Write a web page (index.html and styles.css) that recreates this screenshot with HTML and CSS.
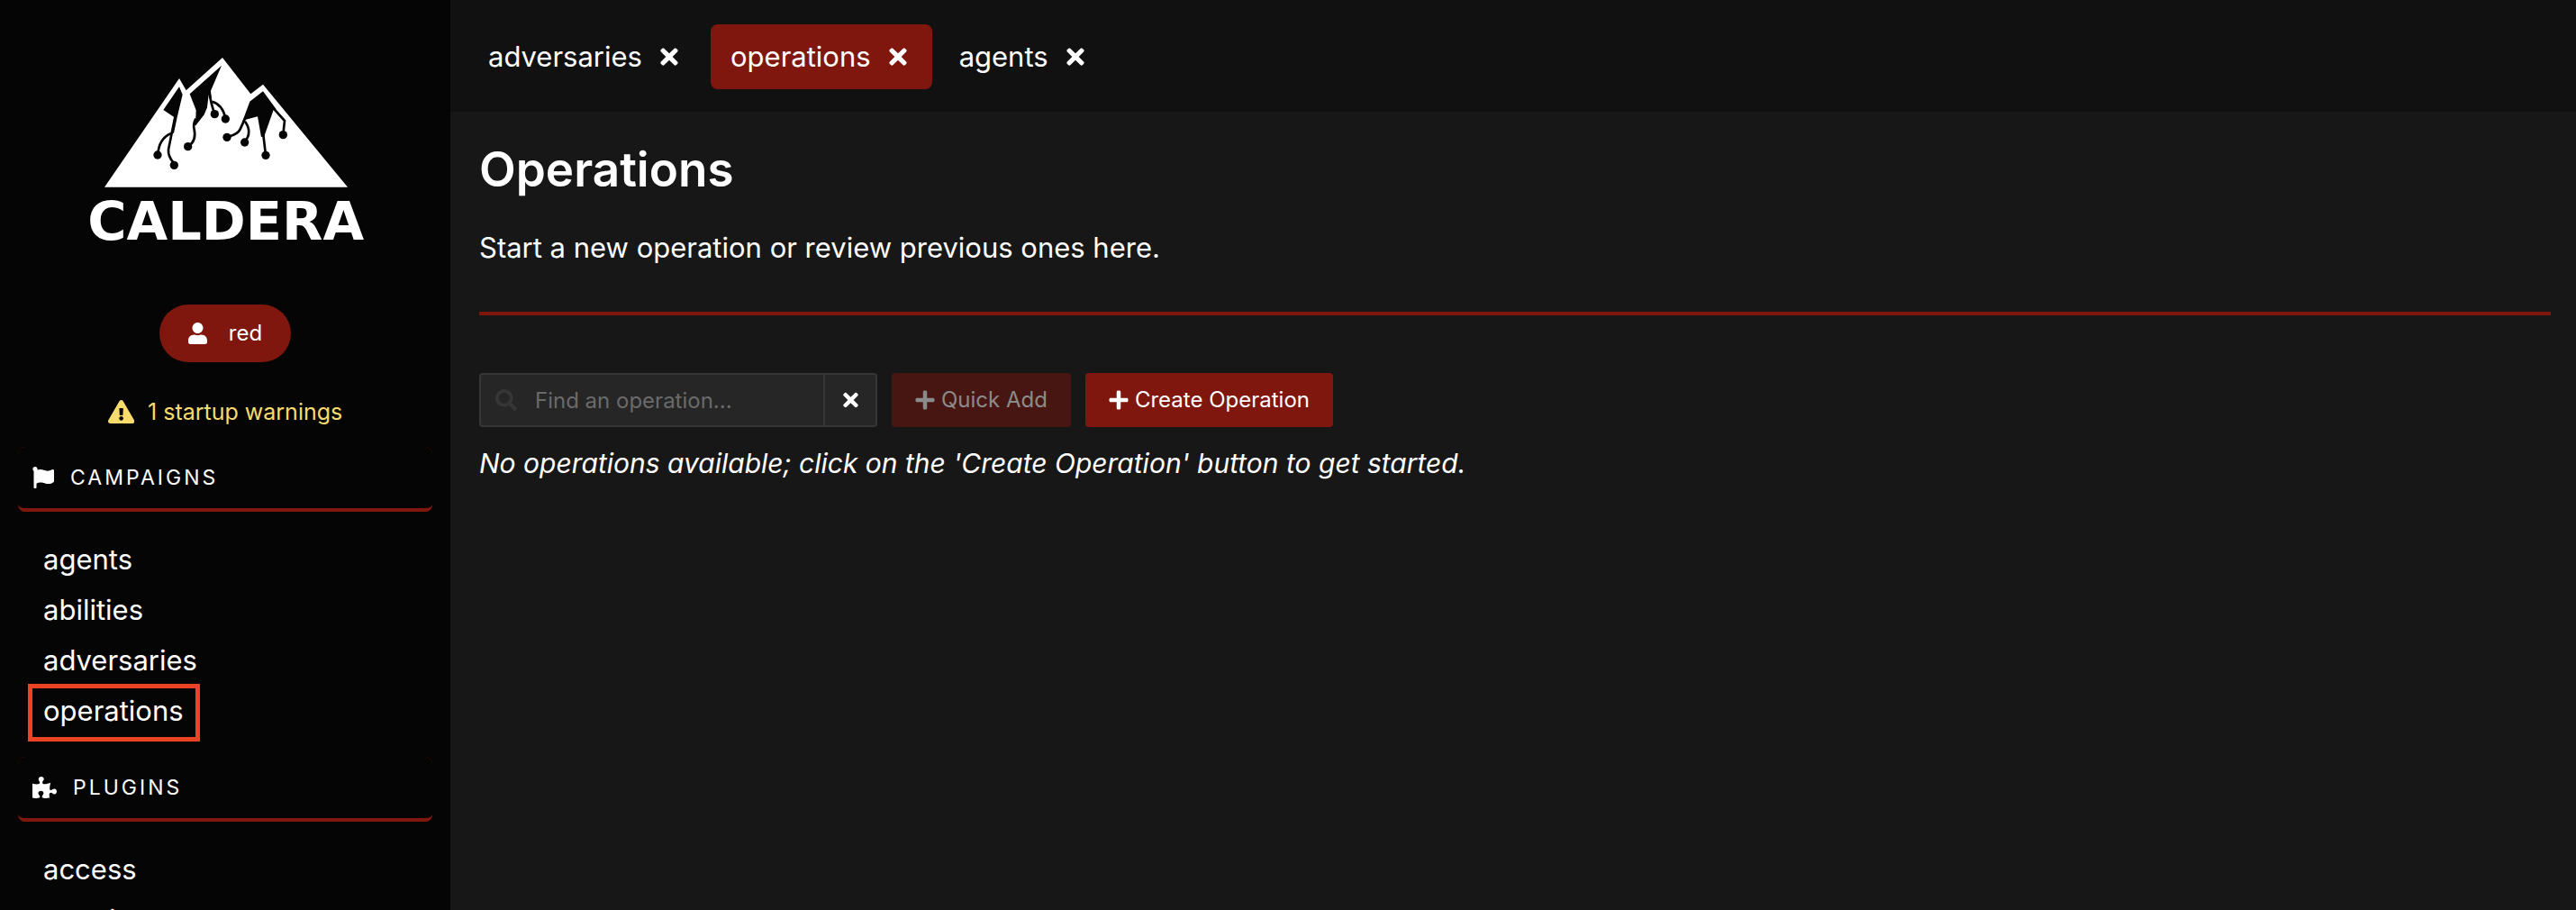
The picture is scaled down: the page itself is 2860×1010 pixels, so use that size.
FILE: index.html
```html
<!DOCTYPE html>
<html lang="en">
<head>
<meta charset="utf-8">
<title>Caldera - Operations</title>
<link rel="stylesheet" href="styles.css">
</head>
<body>
<svg class="sprite" aria-hidden="true">
  <symbol id="times" viewBox="0 0 352 512"><path d="M242.72 256l100.07-100.07c12.28-12.28 12.28-32.19 0-44.48l-22.24-22.24c-12.28-12.28-32.19-12.28-44.48 0L176 189.28 75.93 89.21c-12.28-12.28-32.19-12.28-44.48 0L9.21 111.45c-12.28 12.28-12.28 32.19 0 44.48L109.28 256 9.21 356.07c-12.28 12.28-12.28 32.19 0 44.48l22.24 22.24c12.28 12.28 32.2 12.28 44.48 0L176 322.72l100.07 100.07c12.28 12.28 32.2 12.28 44.48 0l22.24-22.24c12.28-12.28 12.28-32.19 0-44.48L242.72 256z"/></symbol>
  <symbol id="plus" viewBox="0 0 448 512"><path d="M416 208H272V64c0-17.67-14.33-32-32-32h-32c-17.67 0-32 14.33-32 32v144H32c-17.67 0-32 14.33-32 32v32c0 17.67 14.33 32 32 32h144v144c0 17.67 14.33 32 32 32h32c17.67 0 32-14.33 32-32V304h144c17.67 0 32-14.33 32-32v-32c0-17.67-14.33-32-32-32z"/></symbol>
</svg>
<div class="layout">
  <aside class="sidebar">
    <svg class="logo" viewBox="0 0 1020 690" role="img" aria-label="Caldera">
      <g transform="translate(90 30)">
        <path fill="#fff" d="M18 443L267 81l23 40L411 12l94 121 41-32L828 443z"/>
        <g class="logo-cut">
          <path d="M267 109L214 186l36 24L242 264l7-1L260 211 278 135z"/>
          <path d="M408 38L302 133l21 54-1 28-10 18 10 5 28-36 10-24 5-42 10 20-3-34z"/>
          <path d="M546 124L502 158 477 226l12-8 39-10 12 68 10-2 31-88 9-2z"/>
        </g>
        <g class="logo-trace">
          <path d="M254 205L231 318q-2 24 19 46"/><path d="M240 264q-42 18-44 72"/>
          <path d="M322 215q-10 22-5 36 8 38-20 56"/>
          <path d="M368 132q4 30 17 68"/><path d="M376 158q36 10 45 56"/>
          <path d="M486 215L470 250q-8 18-44 26"/><path d="M486 224q26 36-1 68"/>
          <path d="M546 260L555 336"/><path d="M582 182L618 222 613 268"/>
        </g>
        <g class="logo-cut">
          <circle cx="195" cy="336" r="14"/><circle cx="250" cy="370" r="14"/><circle cx="296" cy="308" r="14"/>
          <circle cx="385" cy="200" r="14"/><circle cx="421" cy="216" r="14"/><circle cx="426" cy="277" r="14"/>
          <circle cx="485" cy="294" r="14"/><circle cx="555" cy="337" r="14"/><circle cx="613" cy="269" r="14"/>
        </g>
      </g>
      <text class="wordmark" x="512" y="649" text-anchor="middle">CALDERA</text>
    </svg>
    <button class="user" type="button">
      <svg class="icon-24" viewBox="0 0 448 512"><path d="M224 256c70.7 0 128-57.3 128-128S294.7 0 224 0 96 57.3 96 128s57.3 128 128 128zm89.6 32h-16.7c-22.2 10.2-46.9 16-72.9 16s-50.6-5.8-72.9-16h-16.7C60.2 288 0 348.2 0 422.4V464c0 26.5 21.5 48 48 48h352c26.5 0 48-21.5 48-48v-41.6c0-74.2-60.2-134.4-134.4-134.4z"/></svg>
      <span>red</span>
    </button>
    <a class="warnings" href="#">
      <svg class="icon-26" viewBox="0 0 576 512"><path d="M569.517 440.013C587.975 472.007 564.806 512 527.94 512H48.054c-36.937 0-59.999-40.055-41.577-71.987L246.423 23.985c18.467-32.009 64.72-31.951 83.154 0l239.94 416.028zM288 354c-25.405 0-46 20.595-46 46s20.595 46 46 46 46-20.595 46-46-20.595-46-46-46zm-43.673-165.346l7.418 136c.347 6.364 5.609 11.346 11.982 11.346h48.546c6.373 0 11.635-4.982 11.982-11.346l7.418-136c.375-6.874-5.098-12.654-11.982-12.654h-63.383c-6.884 0-12.356 5.78-11.981 12.654z"/></svg>
      <span>1 startup warnings</span>
    </a>
    <nav class="menu">
      <div class="menu-head">
        <h2 class="menu-label">
          <svg class="icon-24" viewBox="0 0 512 512"><path d="M349.565 98.783C295.978 98.783 251.721 64 184.348 64c-24.955 0-47.309 4.384-68.045 12.013a55.947 55.947 0 0 0 3.586-23.562C118.117 24.015 94.806 1.206 66.338.048 34.345-1.254 8 24.296 8 56c0 19.026 9.497 35.825 24 45.945V488c0 13.255 10.745 24 24 24h16c13.255 0 24-10.745 24-24v-94.4c28.311-12.064 63.582-22.122 114.435-22.122 53.588 0 97.844 34.783 165.217 34.783 48.169 0 86.667-16.294 122.505-40.858C506.84 359.452 512 349.571 512 339.045v-243.1c0-23.393-24.269-38.87-45.485-29.016-34.338 15.948-76.454 31.854-116.95 31.854z"/></svg>
          <span>CAMPAIGNS</span>
        </h2>
      </div>
      <ul class="menu-list">
        <li><a href="#">agents</a></li>
        <li><a href="#">abilities</a></li>
        <li><a href="#">adversaries</a></li>
        <li><a class="marked" href="#">operations</a></li>
      </ul>
      <div class="menu-head">
        <h2 class="menu-label">
          <svg class="icon-24" viewBox="0 0 576 512"><path d="M519.442 288.651c-41.519 0-59.5 31.593-82.058 31.593C377.409 320.244 432 144 432 144s-196.288 80-196.288-3.297c0-35.827 36.288-46.25 36.288-85.985C272 19.216 243.885 0 210.539 0c-34.654 0-66.366 18.891-66.366 56.346 0 41.364 31.711 59.277 31.711 81.75C175.885 207.719 0 166.758 0 166.758v333.237s178.635 41.047 178.635-28.662c0-22.473-40-40.107-40-81.471 0-37.456 29.25-56.346 63.577-56.346 33.673 0 61.788 19.216 61.788 54.717 0 39.735-36.288 50.158-36.288 85.985 0 60.803 129.675 25.73 181.23 25.73 0 0-34.725-120.101 25.827-120.101 35.962 0 46.423 36.152 86.308 36.152C556.712 416 576 387.99 576 354.443c0-34.199-18.962-65.792-56.558-65.792z"/></svg>
          <span>PLUGINS</span>
        </h2>
      </div>
      <ul class="menu-list">
        <li><a href="#">access</a></li>
        <li><a href="#">atomic</a></li>
      </ul>
    </nav>
  </aside>
  <main class="main">
    <div class="tabs">
      <div class="tab"><a href="#">adversaries</a><button type="button" aria-label="Close adversaries"><svg class="icon-28"><use href="#times"/></svg></button></div>
      <div class="tab active"><a href="#">operations</a><button type="button" aria-label="Close operations"><svg class="icon-28"><use href="#times"/></svg></button></div>
      <div class="tab"><a href="#">agents</a><button type="button" aria-label="Close agents"><svg class="icon-28"><use href="#times"/></svg></button></div>
    </div>
    <section class="content">
      <h1>Operations</h1>
      <p class="intro">Start a new operation or review previous ones here.</p>
      <hr>
      <div class="toolbar">
        <div class="search">
          <svg class="icon-24" viewBox="0 0 512 512"><path d="M505 442.7L405.3 343c-4.5-4.5-10.6-7-17-7H372c27.6-35.3 44-79.7 44-128C416 93.1 322.9 0 208 0S0 93.1 0 208s93.1 208 208 208c48.3 0 92.7-16.4 128-44v16.3c0 6.4 2.5 12.5 7 17l99.7 99.7c9.4 9.4 24.6 9.4 33.9 0l28.3-28.3c9.4-9.4 9.4-24.6.1-34zM208 336c-70.7 0-128-57.2-128-128 0-70.7 57.2-128 128-128 70.7 0 128 57.2 128 128 0 70.7-57.2 128-128 128z"/></svg>
          <input type="text" placeholder="Find an operation..." aria-label="Find an operation">
          <button type="button" aria-label="Clear search"><svg class="icon-24 times"><use href="#times"/></svg></button>
        </div>
        <button class="btn" type="button" disabled><svg class="icon-24 plus"><use href="#plus"/></svg>Quick Add</button>
        <button class="btn" type="button"><svg class="icon-24 plus"><use href="#plus"/></svg>Create Operation</button>
      </div>
      <p class="empty">No operations available; click on the 'Create Operation' button to get started.</p>
    </section>
  </main>
</div>
</body>
</html>
```
FILE: styles.css
```css
:root {
  --red: #7f170e;
  --black: #050505;
}

* { box-sizing: border-box; }

body {
  margin: 0;
  background: #171717;
  color: #fff;
  font: 31px/48px Inter, "Liberation Sans", sans-serif;
}

a { color: inherit; text-decoration: none; }
button, input { font: inherit; color: inherit; border: 0; background: none; padding: 0; margin: 0; }
svg { display: block; flex: none; fill: currentColor; }
h1, h2, p, ul, hr { margin: 0; padding: 0; }
ul { list-style: none; }

.sprite { position: absolute; width: 0; height: 0; }
.icon-24 { height: 24px; }
.icon-26 { height: 26px; }
.icon-28 { width: 20px; height: 28px; }
.times { width: 17px; }
.plus { width: 22px; }

.layout { display: flex; height: 100vh; overflow: hidden; }

.sidebar {
  flex: none;
  width: 500px;
  padding: 50px 20px 0;
  background: var(--black);
  overflow: hidden;
  display: flex;
  flex-direction: column;
  align-items: center;
}
.sidebar > * { flex: none; }

.logo { width: 340px; height: 230px; }
.logo-cut { fill: var(--black); }
.logo-trace { fill: none; stroke: var(--black); stroke-width: 8; }
.wordmark { font: bold 177px "DejaVu Sans", sans-serif; fill: #fff; }

.user {
  display: flex;
  align-items: center;
  gap: 24px;
  height: 64px;
  margin-top: 58px;
  padding: 0 32px;
  border-radius: 32px;
  background: var(--red);
  font-size: 24px;
  line-height: 36px;
}

.warnings {
  display: flex;
  align-items: center;
  gap: 15px;
  margin: 37px 0 21px;
  font-size: 25px;
  line-height: 36px;
  color: #f8db6d;
}

.menu { align-self: stretch; }
.menu-head { border-radius: 8px; background: var(--red); }
.menu-label {
  display: flex;
  align-items: center;
  gap: 18px;
  height: 72px;
  padding: 0 16px;
  border-bottom: 4px solid var(--red);
  border-radius: 8px;
  background: var(--black);
  font-size: 23px;
  font-weight: 400;
  line-height: 36px;
  letter-spacing: 3px;
}
.menu-list { padding: 25px 28px 23px; line-height: 56px; }
.menu-list a { display: inline-block; }
.marked { position: relative; }
.marked::after {
  content: "";
  position: absolute;
  inset: -2px -18px -6px -17px;
  border: 5px solid #ec4324;
}

.main { flex: 1; min-width: 0; }
.tabs {
  display: flex;
  align-items: center;
  gap: 8px;
  height: 124px;
  padding: 2px 20px 0;
  background: #111;
}
.tab {
  display: flex;
  align-items: center;
  gap: 20px;
  height: 72px;
  padding: 0 28px 0 22px;
  border-radius: 8px;
}
.tab.active { background: var(--red); }

.content { padding: 32px 28px 0 32px; }
h1 { font-size: 53px; font-weight: 600; line-height: 64px; }
.intro { margin-top: 31px; }
hr { height: 4px; margin: 47px 0 64px; border: 0; background: var(--red); }

.toolbar { display: flex; gap: 16px; font-size: 24px; line-height: 36px; }
.search {
  display: flex;
  align-items: center;
  width: 442px;
  height: 60px;
  padding-left: 16px;
  border: 2px solid #363636;
  border-radius: 4px;
  background: #262626;
}
.search > svg { color: #363636; }
.search input { flex: 1; min-width: 0; height: 56px; padding-left: 20px; outline: 0; }
.search input::placeholder { color: #6a6a6a; opacity: 1; }
.search button {
  display: grid;
  place-items: center;
  width: 58px;
  height: 56px;
  border-left: 2px solid #363636;
}
.btn {
  display: flex;
  align-items: center;
  gap: 7px;
  height: 60px;
  padding: 0 26px;
  border-radius: 4px;
  background: var(--red);
}
.btn:disabled { background: #481612; color: #8b8b8b; }

.empty { margin-top: 16px; font-size: 30px; font-style: italic; }
```
